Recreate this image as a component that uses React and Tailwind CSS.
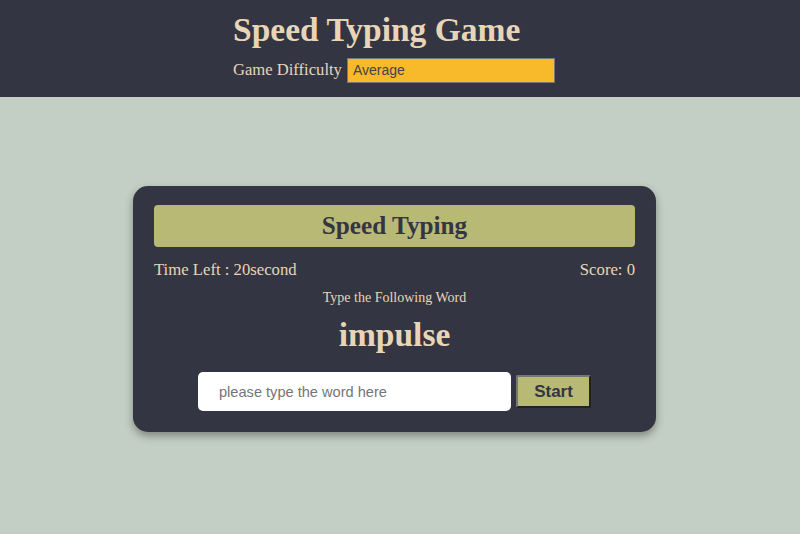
import { useState } from 'react'

export default function App() {
  const [level, setLevel] = useState('Average')
  const [text, setText] = useState('')

  return (
    <div className="min-h-[534px] bg-[#c3cfc4] font-['Liberation_Serif',serif]">
      <header className="bg-[#333542] h-[97px] pl-[233px] pt-[11px]">
        <h1 className="text-[33.5px] leading-[38px] font-bold text-[#e8d5b7]">Speed Typing Game</h1>
        <div className="flex items-center mt-[9px] gap-[5px]">
          <label className="text-[16.6px] text-[#e8d5b7]">Game Difficulty</label>
          <select
            value={level}
            onChange={(e) => setLevel(e.target.value)}
            className="w-[208px] h-[25px] bg-[#f8b92b] border border-[#777] text-[14px] text-[#444] pl-[5px] font-['Liberation_Sans',sans-serif] appearance-none outline-none"
          >
            <option>Easy</option>
            <option>Average</option>
            <option>Hard</option>
          </select>
        </div>
      </header>

      <div className="pt-[89px] pl-[133px]">
        <div className="w-[523px] h-[246px] bg-[#333542] rounded-[15px] shadow-[0_4px_8px_rgba(0,0,0,0.35)] px-[21px] pt-[19px]">
          <div className="h-[42px] bg-[#b8b974] rounded-[4px] flex items-center justify-center">
            <h2 className="text-[25.2px] font-bold text-[#333542]">Speed Typing</h2>
          </div>
          <div className="flex justify-between mt-[12px] text-[16.7px] leading-[21px] text-[#e8d5b7]">
            <span>Time Left : 20second</span>
            <span>Score: 0</span>
          </div>
          <p className="text-center text-[14px] leading-[17px] mt-[9px] text-[#e8d5b7]">Type the Following Word</p>
          <p className="text-center text-[33.5px] leading-[38px] font-bold mt-[10px] text-[#e8d5b7]">impulse</p>
          <div className="flex items-center justify-center gap-[5px] mt-[18px]">
            <input
              value={text}
              onChange={(e) => setText(e.target.value)}
              placeholder="please type the word here"
              className="w-[313px] h-[39px] bg-white rounded-[5px] px-[21px] text-[14.6px] text-[#333] placeholder:text-[#757575] font-['Liberation_Sans',sans-serif] outline-none"
            />
            <button className="w-[75px] h-[33px] bg-[#b8b974] border-2 border-[#767676] border-r-[#222] border-b-[#222] rounded-[2px] text-[17px] font-bold text-[#333542] font-['Liberation_Sans',sans-serif]">
              Start
            </button>
          </div>
        </div>
      </div>
    </div>
  )
}
